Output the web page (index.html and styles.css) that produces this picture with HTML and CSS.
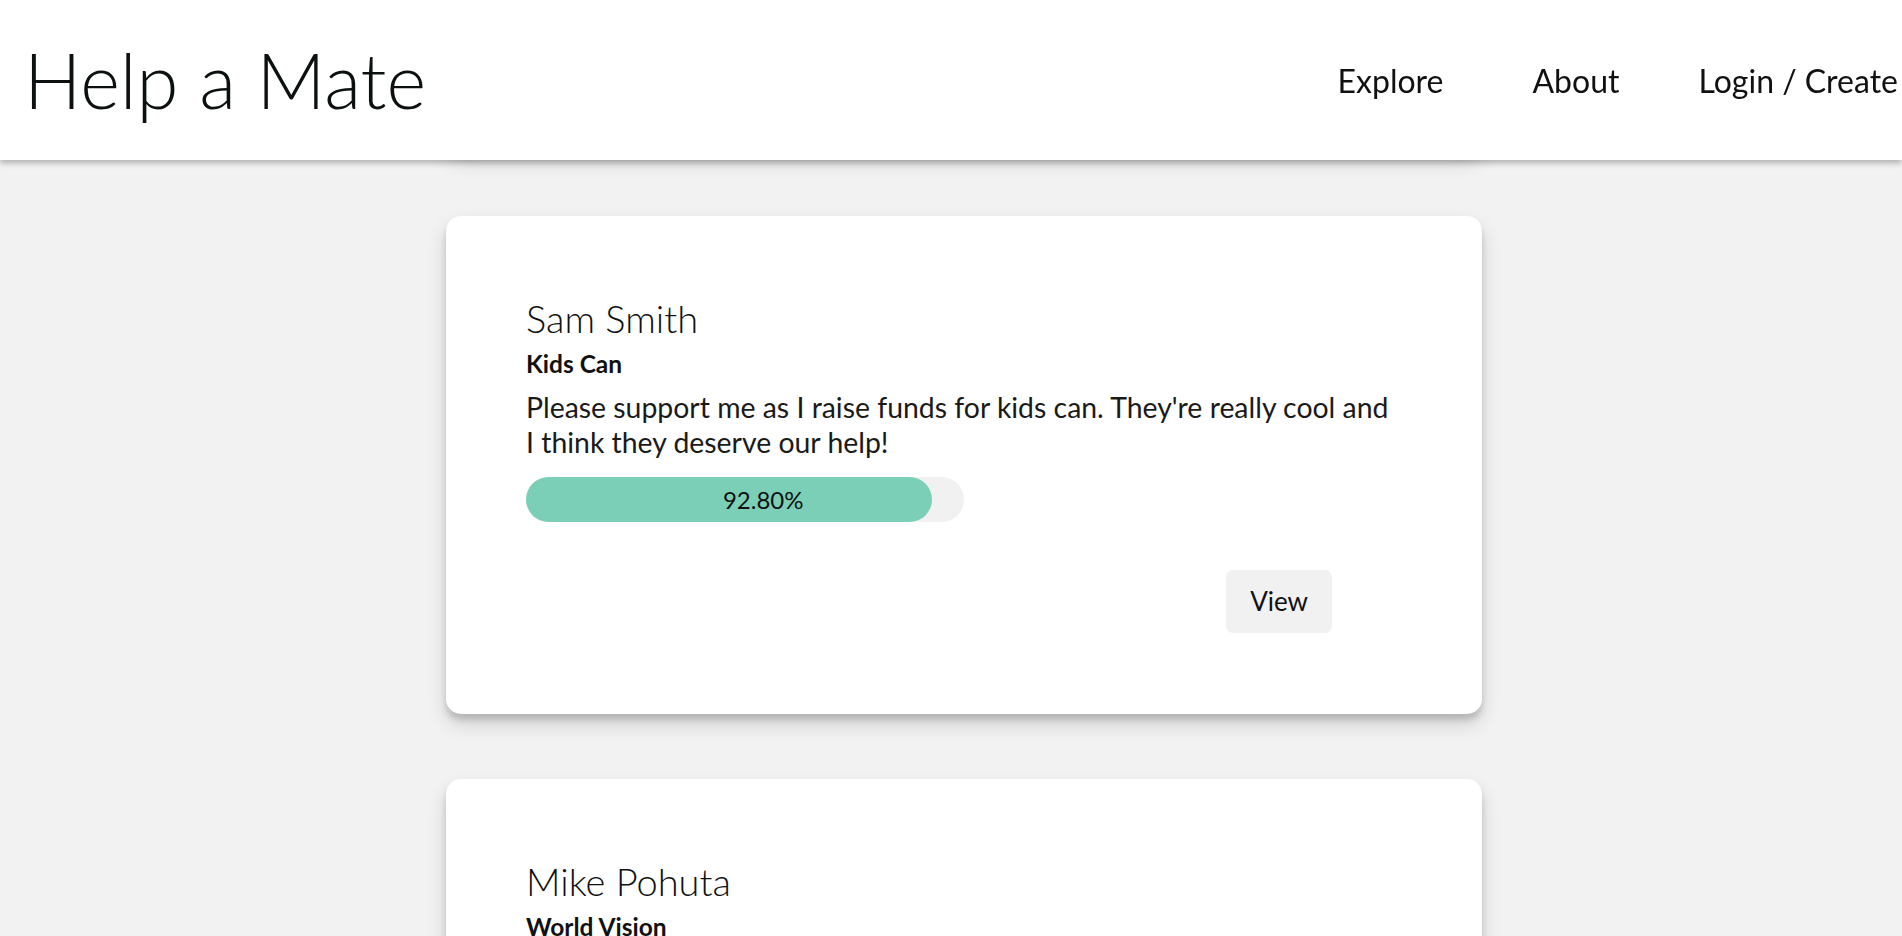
FILE: index.html
```html
<!DOCTYPE html>
<html lang="en">
<head>
<meta charset="utf-8">
<title>Help a Mate</title>
<link rel="stylesheet" href="styles.css">
</head>
<body>
<header class="topbar">
  <h1 class="brand">Help a Mate</h1>
  <nav class="nav">
    <a class="nav-link nav-explore" href="#">Explore</a>
    <a class="nav-link nav-about" href="#">About</a>
    <a class="nav-link" href="#">Login / Create</a>
  </nav>
</header>
<main class="feed">
  <section class="card card-hidden"></section>
  <section class="card">
    <h2 class="card-name">Sam Smith</h2>
    <p class="card-org">Kids Can</p>
    <p class="card-desc">Please support me as I raise funds for kids can. They're really cool and I think they deserve our help!</p>
    <div class="progress">
      <div class="progress-fill" style="width: 92.8%">92.80%</div>
    </div>
    <div class="card-actions">
      <button class="btn-view" type="button">View</button>
    </div>
  </section>
  <section class="card">
    <h2 class="card-name">Mike Pohuta</h2>
    <p class="card-org">World Vision</p>
    <p class="card-desc">Help me support World Vision as they work with children, families and communities to overcome poverty.</p>
    <div class="progress">
      <div class="progress-fill" style="width: 64%">64.00%</div>
    </div>
    <div class="card-actions">
      <button class="btn-view" type="button">View</button>
    </div>
  </section>
</main>
</body>
</html>
```

FILE: styles.css
```css
* { box-sizing: border-box; }

html, body {
  margin: 0;
  padding: 0;
}

body {
  background: #f2f2f2;
  font-family: Lato, "Open Sans", sans-serif;
  color: #111;
  overflow: hidden;
}

.topbar {
  position: fixed;
  top: 0;
  left: 0;
  right: 0;
  height: 160px;
  background: #fff;
  display: flex;
  align-items: center;
  justify-content: space-between;
  padding: 0 4px 0 24px;
  box-shadow: 0 3px 6px rgba(0, 0, 0, 0.28);
  z-index: 10;
}

.brand {
  margin: 0;
  font-weight: 300;
  font-size: 76px;
  line-height: 1.2;
  color: #0c1010;
}

.nav {
  display: flex;
  align-items: center;
}

.nav-link {
  font-size: 32px;
  font-weight: 400;
  color: #111;
  text-decoration: none;
}

.nav-explore { margin-right: 89px; }
.nav-about { margin-right: 79px; }

.feed {
  display: flex;
  flex-direction: column;
  align-items: center;
  gap: 65px;
  margin-top: -347px;
  padding-left: 26px;
}

.card {
  width: 1036px;
  min-height: 498px;
  background: #fff;
  border-radius: 15px;
  padding: 80px 80px 80px;
  box-shadow: 0 10px 20px rgba(0, 0, 0, 0.14), 0 6px 6px rgba(0, 0, 0, 0.15);
}

.card-name {
  margin: 0;
  font-size: 38px;
  font-weight: 300;
  line-height: 1.2;
}

.card-org {
  margin: 7px 0 0;
  font-size: 24.5px;
  font-weight: 700;
  line-height: 1.2;
}

.card-desc {
  margin: 12px 10px 0 0;
  font-size: 28.4px;
  line-height: 35px;
  color: #1a1a1a;
}

.progress {
  margin-top: 17px;
  width: 50%;
  height: 45px;
  background: #f1f1f1;
  border-radius: 23px;
  display: flex;
}

.progress-fill {
  height: 100%;
  background: #7bcfb6;
  border-radius: 23px;
  display: flex;
  align-items: center;
  justify-content: center;
  padding-left: 68px;
  font-size: 24px;
  color: #111;
}

.card-actions {
  display: flex;
  justify-content: flex-end;
  margin-top: 48px;
  padding-right: 70px;
}

.btn-view {
  font-family: Lato, "Open Sans", sans-serif;
  font-size: 26px;
  color: #111;
  background: #f1f1f1;
  border: none;
  border-radius: 7px;
  padding: 0 24px;
  height: 63px;
  cursor: pointer;
}
```
